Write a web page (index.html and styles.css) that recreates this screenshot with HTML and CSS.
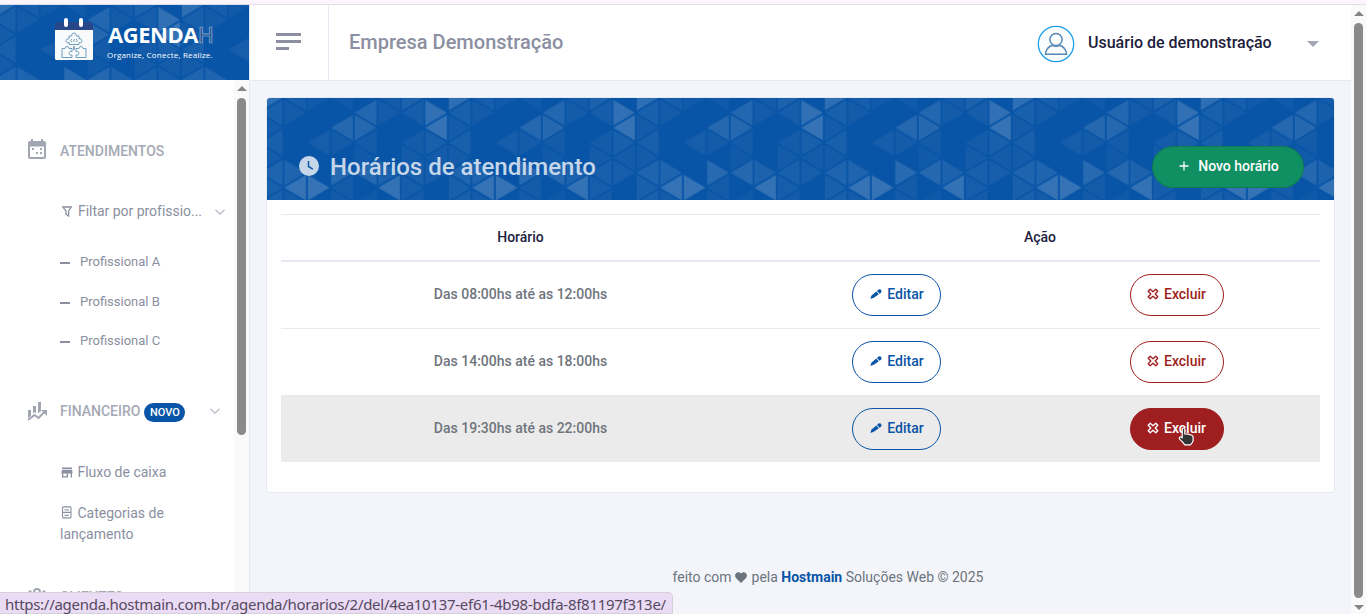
FILE: index.html
```html
<!DOCTYPE html>
<html lang="pt-BR">
<head>
<meta charset="utf-8">
<title>Agendah</title>
<link rel="stylesheet" href="styles.css">
</head>
<body>
<svg class="defs" width="0" height="0" aria-hidden="true">
  <defs>
    <path id="r" d="M1 -12.7V12.7L22.6 0Z"/>
    <path id="l" d="M22.6 -12.7V12.7L1 0Z"/>
    <pattern id="tri" x="-7.2" y="-.3" width="188" height="120" patternUnits="userSpaceOnUse">
      <g fill="#fff" opacity=".9">
        <g><use href="#r" y="0" opacity=".17"/><use href="#l" y="15" opacity=".08"/><use href="#r" y="30" opacity=".05"/><use href="#l" y="45" opacity=".08"/><use href="#r" y="60" opacity=".05"/><use href="#l" y="75" opacity=".1"/><use href="#r" y="90" opacity=".08"/><use href="#l" y="105" opacity=".07"/></g>
        <g transform="translate(23.5)"><use href="#l" y="0" opacity=".06"/><use href="#r" y="15" opacity=".05"/><use href="#r" y="75" opacity=".1"/><use href="#l" y="90" opacity=".2"/><use href="#r" y="105" opacity=".05"/></g>
        <g transform="translate(47)"><use href="#r" y="0" opacity=".04"/><use href="#l" y="45" opacity=".06"/><use href="#r" y="90" opacity=".2"/></g>
        <g transform="translate(70.5)"><use href="#l" y="0" opacity=".04"/><use href="#l" y="30" opacity=".13"/><use href="#r" y="45" opacity=".05"/><use href="#r" y="75" opacity=".14"/><use href="#l" y="90" opacity=".05"/><use href="#r" y="105" opacity=".05"/></g>
        <g transform="translate(94)"><use href="#l" y="15" opacity=".12"/><use href="#r" y="30" opacity=".13"/><use href="#l" y="45" opacity=".05"/><use href="#r" y="60" opacity=".04"/><use href="#l" y="75" opacity=".13"/><use href="#l" y="105" opacity=".03"/></g>
        <g transform="translate(117.5)"><use href="#l" y="0" opacity=".05"/><use href="#r" y="15" opacity=".05"/><use href="#r" y="75" opacity=".09"/><use href="#l" y="90" opacity=".19"/></g>
        <g transform="translate(141)"><use href="#r" y="0" opacity=".09"/><use href="#l" y="15" opacity=".06"/><use href="#l" y="45" opacity=".05"/><use href="#r" y="60" opacity=".05"/><use href="#l" y="75" opacity=".08"/><use href="#r" y="90" opacity=".06"/><use href="#l" y="105" opacity=".05"/></g>
        <g transform="translate(164.5)"><use href="#r" y="15" opacity=".18"/><use href="#l" y="30" opacity=".2"/><use href="#r" y="45" opacity=".07"/><use href="#l" y="60" opacity=".05"/><use href="#r" y="75" opacity=".06"/></g>
      </g>
    </pattern>
    <symbol id="pencil" viewBox="0 0 12 12"><path fill="currentColor" d="M.4 11L1.300 7.800 6.300 3.600l2.500 2.600-5 3.600zM7 3l1.600-1.500q1-.6 2 .1.900.8.900 1.700 0 1-.8 1.700L9.500 5.800z"/></symbol>
    <symbol id="cross" viewBox="0 0 12 12"><path fill="none" stroke="currentColor" stroke-width="1.300" stroke-linejoin="round" d="M3.200 1.200L6 3.800 8.800 1.200 10.800 3.200 8.200 6 10.800 8.800 8.800 10.800 6 8.200 3.200 10.800 1.200 8.800 3.800 6 1.200 3.200z"/></symbol>
    <symbol id="chev" viewBox="0 0 10 6"><path fill="none" stroke="currentColor" stroke-width="1.2" d="M.5 .7L5 5.1 9.5 .7"/></symbol>
  </defs>
</svg>
<div class="browser-edge"></div>
<div class="window">
  <aside class="sidebar">
    <div class="brand">
      <svg class="texture"><rect width="100%" height="100%" fill="url(#tri)"/></svg>
      <svg class="brand-icon" width="40" height="44" viewBox="0 0 40 44">
        <rect x="1" y="5" width="38" height="37" rx="1.5" fill="#f8fafc"/>
        <path fill="#284789" d="M1 12V6Q1 4 3 4H37Q39 4 39 6V12z"/>
        <g fill="#fff"><rect x="10" y="0" width="4" height="9" rx="2"/><rect x="25" y="0" width="4" height="9" rx="2"/></g>
        <g fill="none" stroke="#6f9fbd" stroke-width="1">
          <path d="M15 18h2.800a2.300 2.300 0 1 1 4.400 0H25v3a2 2 0 1 1 0 3.500V26.500H15v-2a2 2 0 1 1 0-3.500zM18 21l-1.300 1.500L18 24M22 21l1.300 1.500L22 24M20.500 21l-1 3"/>
          <path d="M8 30.500h3a2 2 0 1 1 4 0h3v3a2 2 0 1 0 0 3.500v2.500H8zM32 30.500h-3a2 2 0 1 0-4 0h-3v3a2 2 0 1 1 0 3.500v2.500h10z"/>
        </g>
        <path d="M20 28v4" stroke="#285b91"/>
      </svg>
      <div class="brand-text">
        <div class="brand-name">AGENDA<span>H</span></div>
        <div class="brand-tag">Organize, Conecte, Realize.</div>
      </div>
    </div>
    <div class="side-body">
      <nav class="menu">
        <div class="head first">
          <svg width="20" height="21" viewBox="0 0 20 21"><path fill="#a2a6b3" fill-rule="evenodd" d="M4 0h2v2h8V0h2v2h1q2 0 2 2v14q0 2-2 2H3q-2 0-2-2V4q0-2 2-2h1zM3 7.500V18h14V7.500z"/><path fill="#a2a6b3" d="M5 9h2v2H5zM13 9h2v2h-2zM9 13h2v2H9zM13 13h2v2h-2z"/></svg>
          <span>ATENDIMENTOS</span>
        </div>
        <div class="filter">
          <svg width="10" height="11" viewBox="0 0 10 11"><path fill="none" stroke="#8c90a0" stroke-width="1.300" d="M.8 1h8.400L6.600 5v5L4 8.200V5z"/></svg>
          <span>Filtar por profissio...</span>
          <svg class="chev" width="10" height="6"><use href="#chev"/></svg>
        </div>
        <div class="pro">Profissional A</div>
        <div class="pro">Profissional B</div>
        <div class="pro last">Profissional C</div>
        <div class="head fin">
          <svg width="20" height="20" viewBox="0 0 20 20"><path fill="#a2a6b3" d="M1 9h3v6l-3 2zM6 5h3v7.500L7.500 11 6 12.500zM11 1h3v9l-3 2.500z"/><path fill="none" stroke="#a2a6b3" stroke-width="2" d="M1 19l6.500-5 4 3L17.500 11"/><path fill="#a2a6b3" d="M14 9h6v6z"/></svg>
          <span>FINANCEIRO</span><b class="badge">NOVO</b>
          <svg class="chev" width="10" height="6"><use href="#chev"/></svg>
        </div>
        <div class="sub flux"><svg width="12" height="11" viewBox="0 0 12 11"><path fill="#8c90a0" fill-rule="evenodd" d="M1 .5h10V2H1zM.9 2.800h10.200L11.600 6.500H11v4H9.700v-4H7v4H1v-4H.4zM2.300 6.500v2.700h3.300V6.500z"/></svg> Fluxo de caixa</div>
        <div class="sub"><svg width="12" height="13" viewBox="0 0 12 13"><g fill="none" stroke="#8c90a0" stroke-width="1.100"><rect x="1.500" y=".9" width="8.500" height="11" rx="1"/><path d="M1.500 6.400h8.500M4.200 3v1h3V3M4.200 8.500v1h3v-1"/></g></svg> Categorias de lançamento</div>
        <div class="head cli">
          <svg width="20" height="20" viewBox="0 0 20 20"><g fill="none" stroke="#a2a6b3" stroke-width="2"><circle cx="10" cy="5" r="3"/><path d="M4 16v-2q0-3 6-3t6 3v2"/></g><circle cx="3" cy="5" r="1.700" fill="#a2a6b3"/><circle cx="17" cy="5" r="1.700" fill="#a2a6b3"/></svg>
          <span>CLIENTES</span>
        </div>
      </nav>
      <div class="scroll side-scroll"><i class="up"></i><i class="thumb"></i></div>
    </div>
  </aside>
  <div class="page">
    <header class="topbar">
      <div class="burger"><i></i><i></i><i class="short"></i></div>
      <div class="company">Empresa Demonstração</div>
      <svg class="avatar" width="38" height="38" viewBox="0 0 38 38"><circle cx="19" cy="19" r="17.700" fill="#fbfdff" stroke="#199ee8" stroke-width="1.300"/><g fill="none" stroke="#5788b5" stroke-width="1.500"><circle cx="19" cy="14.500" r="6.100"/><path d="M8.500 29.300q.3-6.500 6.700-9Q19 22.300 22.800 20.300q6.400 2.500 6.700 9z"/></g></svg>
      <div class="user">Usuário de demonstração</div>
      <i class="caret"></i>
    </header>
    <main>
      <section class="card">
        <div class="banner">
          <svg class="texture"><rect width="100%" height="100%" fill="url(#tri)"/></svg>
          <svg class="clock" width="20" height="20" viewBox="0 0 20 20"><circle cx="10" cy="10" r="10" fill="#c6d7ea"/><path d="M9.500 5v5.500l4.300 2.700" fill="none" stroke="#0b56a6" stroke-width="1.500"/></svg>
          <h1>Horários de atendimento</h1>
          <button class="new"><svg width="10" height="10"><path d="M5 .5v9M.5 5h9" stroke="#fff" stroke-width="1.300"/></svg>Novo horário</button>
        </div>
        <div class="table">
          <div class="row th"><div>Horário</div><div class="acts">Ação</div></div>
          <div class="row"><div>Das 08:00hs até as 12:00hs</div><div><button class="btn edit"><svg><use href="#pencil"/></svg>Editar</button></div><div><button class="btn del"><svg><use href="#cross"/></svg>Excluir</button></div></div>
          <div class="row"><div>Das 14:00hs até as 18:00hs</div><div><button class="btn edit"><svg><use href="#pencil"/></svg>Editar</button></div><div><button class="btn del"><svg><use href="#cross"/></svg>Excluir</button></div></div>
          <div class="row hover"><div>Das 19:30hs até as 22:00hs</div><div><button class="btn edit"><svg><use href="#pencil"/></svg>Editar</button></div><div><button class="btn del active"><svg><use href="#cross"/></svg>Excluir</button></div></div>
        </div>
      </section>
      <footer>feito com <svg width="12" height="11" viewBox="0 0 12 11"><path fill="#6b747d" d="M6 11L1 6C-2 2 3-2 6 1.500 9-2 14 2 11 6z"/></svg> pela <b>Hostmain</b> Soluções Web © 2025</footer>
    </main>
  </div>
  <div class="scroll main-scroll"><i class="up"></i><i class="thumb"></i><i class="down"></i></div>
</div>
<div class="status">https://agenda.hostmain.com.br/agenda/horarios/2/del/4ea10137-ef61-4b98-bdfa-8f81197f313e/</div>
<svg class="cursor" width="18" height="20" viewBox="0 0 20 23"><path fill="#333" stroke="#fff" stroke-width="1.400" stroke-linejoin="round" d="M4.500 2.500Q6-.2 7.500 2.500V8q4 0 8 1.500 1.500.5 1.500 2.500v4q-1 3-3 4.500H7.500Q5 17 2 14.500.3 12.300 2 11.500q1.500-.3 2.500 1z"/></svg>
</body>
</html>
```
FILE: styles.css
```css
* { box-sizing: border-box; }
body { margin: 0; width: 1366px; height: 614px; overflow: hidden; font-family: Roboto, "Liberation Sans", sans-serif; font-size: 14px; background: #f4f5fa; position: relative; }
.defs { position: absolute; }
svg { flex: none; }
button { font: inherit; padding: 0; }
.browser-edge { height: 5px; background: #fcf5fd; border-bottom: 1px solid #e3dde8; }
.window { display: flex; height: 609px; }

.sidebar { width: 250px; border-right: 1px solid #e5e9f2; background: #fff; display: flex; flex-direction: column; }
.brand { height: 75px; background: #0854a6; position: relative; display: flex; padding: 13px 0 0 54px; }
.texture { position: absolute; left: 0; top: 0; width: 100%; height: 100%; }
.brand-icon, .brand-text, .clock, .banner h1, .new { position: relative; }
.brand-text { margin: 2px 0 0 13px; color: #fff; font-family: "Open Sans", "Noto Sans", sans-serif; white-space: nowrap; }
.brand-name { font-size: 22px; line-height: 29px; font-weight: 700; letter-spacing: -.45px; padding-left: 1px; }
.brand-name span { font-size: 21px; font-weight: 600; letter-spacing: 0; color: #285899; -webkit-text-stroke: .7px #8fb0d6; }
.brand-tag { font-size: 8px; line-height: 10px; letter-spacing: .2px; }
.side-body { display: flex; flex: 1; min-height: 0; }
.menu { width: 234px; height: 534px; overflow: hidden; }
.head { display: flex; align-items: center; height: 24px; padding-left: 27px; font-weight: 500; color: #a5a9b5; white-space: nowrap; }
.head > span { margin-left: 13px; }
.head.first { margin-top: 58px; }
.first svg { margin-bottom: 1px; }
.first span { margin-top: 1px; }
.filter { display: flex; align-items: center; height: 20px; margin-top: 39px; padding-left: 62px; color: #8a8fa0; white-space: nowrap; }
.filter span { width: 124px; margin-left: 6px; letter-spacing: -.03px; }
.chev { color: #b6bac5; overflow: visible; }
.filter .chev { margin: 1px 0 0 13px; }
.pro { height: 20px; margin-top: 20px; padding-left: 60px; font-size: 13px; line-height: 20px; color: #8a8fa0; display: flex; align-items: center; }
.filter + .pro { margin-top: 31px; }
.pro.last { margin-top: 19px; }
.pro::before { content: ""; width: 10px; height: 2px; background: #8a8fa0; margin: 2px 10px 0 0; }
.fin { margin-top: 48px; }
.badge { width: 41px; height: 19px; margin: 2px 25px 0 4px; border-radius: 10px; background: #0854a6; color: #fff; font-size: 11px; line-height: 19px; text-align: center; font-weight: 500; }
.sub { padding: 0 50px 0 60px; font-size: 14px; line-height: 21px; margin-top: 20px; color: #8a8fa0; }
.sub.flux { margin-top: 39px; }
.sub svg { vertical-align: -1px; margin: 0 1px; }
.cli { margin-top: 40px; }

.scroll { width: 15px; display: flex; flex-direction: column; align-items: center; background: #fafafa; }
.scroll i { display: block; flex: none; }
.up, .down { width: 0; height: 0; border: 5px solid transparent; }
.up { border-top: 0; border-bottom-color: #858585; }
.down { border-bottom: 0; border-top-color: #858585; }
.thumb { width: 9px; border-radius: 5px; background: #8a8a8a; }
.side-scroll .up { margin-top: 6px; }
.side-scroll .thumb { height: 337px; margin-top: 7px; }
.main-scroll .up { margin-top: 6px; }
.main-scroll .thumb { height: 575px; margin-top: 7px; }
.main-scroll .down { margin-top: 7px; }

.page { width: 1101px; }
.topbar { height: 76px; background: #fff; border-bottom: 1px solid #e5e9f2; display: flex; align-items: center; }
.burger { width: 79px; height: 75px; padding: 28px 0 0 26px; border-right: 1px solid #e5e9f2; }
.burger i { display: block; width: 25px; height: 3px; margin-bottom: 4px; background: #8b8fa1; }
.burger .short { width: 13px; }
.company { width: 689px; padding: 0 0 2px 20px; font-size: 20px; font-weight: 500; color: #8b8fa1; }
.avatar { margin: 2px 0 0 19px; }
.user { width: 219px; margin-left: 13px; font-size: 16px; font-weight: 500; color: #1d203b; }
.caret { border: 6px solid transparent; border-bottom: 0; border-top-color: #a3a7b4; margin-top: 2px; }

main { padding: 16px 0 0 16px; }
.card { width: 1069px; height: 396px; border: 1px solid #e5e9f2; border-radius: 4px; background: #fff; }
.banner { height: 102px; background: #0854a6; position: relative; border-radius: 3px 3px 0 0; overflow: hidden; display: flex; align-items: flex-start; }
.clock { margin: 58px 0 0 32px; }
.banner h1 { width: 822px; margin: 54px 0 0 11px; font-size: 24px; line-height: 30px; font-weight: 500; color: #c6d7ea; }
.new { width: 152px; height: 42px; margin-top: 48px; border-radius: 21px; border: 1px solid #127a50; background: #108f62; color: #fff; font-weight: 500; display: flex; align-items: center; justify-content: center; gap: 9px; padding: 0 0 2px 2px; }
.table { margin: 14px 14px 0; border-top: 1px solid #e5e9f2; }
.row { display: grid; grid-template-columns: 479px 273px 287px; height: 67px; border-bottom: 1px solid #e5e9f2; align-items: center; text-align: center; font-weight: 500; color: #6f757d; }
.row > div { display: flex; justify-content: center; }
.row.th { height: 47px; border-bottom-width: 2px; color: #20233f; }
.row.th > div { padding-bottom: 1px; }
.row .acts { grid-column: span 2; }
.row.hover { background: #ebebeb; border-bottom: 0; height: 66px; }
.row:not(.th) > div:first-child { padding-bottom: 3px; }
.btn { height: 42px; border: 1px solid; border-radius: 21px; background: none; font-weight: 500; display: flex; align-items: center; justify-content: center; gap: 5px; padding-bottom: 2px; }
.btn svg { width: 12px; height: 12px; }
.edit { width: 89px; color: #0854a6; padding-left: 1px; }
.del { width: 94px; color: #9f1f20; }
.active { background: #9f1f20; color: #fff; border-color: #9f1f20; }
footer { width: 1069px; margin-top: 74px; padding-left: 55px; font-size: 14px; line-height: 20px; color: #6b747d; text-align: center; white-space: nowrap; }
footer svg { vertical-align: -1px; margin-right: 1px; }
footer b { color: #0854a6; }

.status { position: absolute; left: 0; bottom: 0; width: 673px; height: 22px; padding-left: 5px; background: #eadcf5; border: 1px solid #d5d0da; border-left: 0; border-radius: 0 5px 0 0; color: #56495f; font-family: "Noto Sans", sans-serif; font-size: 15px; letter-spacing: -.28px; line-height: 22px; white-space: nowrap; }
.cursor { position: absolute; left: 1178px; top: 427px; }
```
